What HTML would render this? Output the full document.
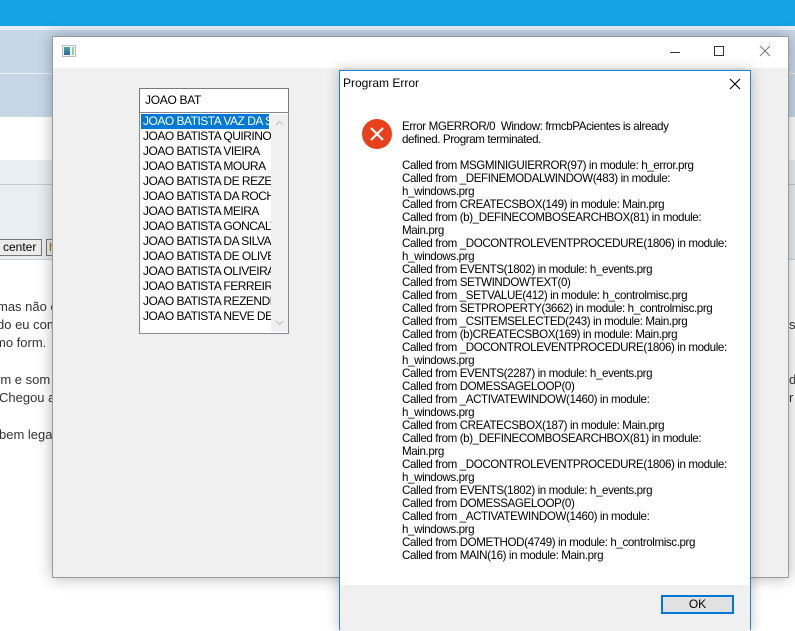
<!DOCTYPE html>
<html><head><meta charset="utf-8"><style>
*{margin:0;padding:0;box-sizing:border-box}
body{width:795px;height:624px;overflow:hidden;position:relative;background:#fff;font-family:"Liberation Sans",sans-serif}
.abs{position:absolute}
.bg-text{position:absolute;font-size:13px;color:#333;white-space:nowrap}
.list div{height:15px;line-height:15px;font-size:12px;letter-spacing:-0.5px;color:#000;padding-left:2px;white-space:nowrap;overflow:hidden;width:130px}
.err{position:absolute;left:402px;top:120px;font-size:11.6px;letter-spacing:-0.4px;line-height:13px;color:#000;white-space:pre}
</style></head><body>
<div class="abs" style="left:0;top:0;width:795px;height:26px;background:#16a3e6"></div>
<div class="abs" style="left:0;top:26px;width:795px;height:4px;background:#e8eef4"></div>
<div class="abs" style="left:0;top:30px;width:795px;height:43px;background:#c6d8e8"></div>
<div class="abs" style="left:0;top:73px;width:795px;height:1px;background:#eef3f8"></div>
<div class="abs" style="left:0;top:74px;width:795px;height:43px;background:#c6d8e8"></div>
<div class="abs" style="left:0;top:160px;width:795px;height:100px;background:#e9eef2"></div>
<div class="abs" style="left:0;top:184px;width:795px;height:1px;background:#c8c8c8"></div>
<div class="abs" style="left:0;top:259px;width:795px;height:1px;background:#d0d0d0"></div>
<div class="abs" style="left:-2px;top:239px;width:44px;height:17px;border:1px solid #777;background:#ececec;font-size:12px;line-height:15px;padding-left:4px">center</div>
<div class="abs" style="left:46px;top:239px;width:10px;height:17px;border:1px solid #777;background:#ececec;font-size:12px;line-height:15px;padding-left:2px;color:#a60">h</div>
<div class="bg-text" style="left:-3px;top:299px">mas não co</div>
<div class="bg-text" style="left:-3px;top:317px">do eu com</div>
<div class="bg-text" style="left:-5px;top:335px">mo form.</div>
<div class="bg-text" style="left:-4px;top:372px">rm e som</div>
<div class="bg-text" style="left:-1px;top:390px">Chegou a</div>
<div class="bg-text" style="left:-1px;top:427px">bem lega</div>
<div class="bg-text" style="left:789px;top:317px">s</div>
<div class="bg-text" style="left:789px;top:372px">d</div>
<div class="bg-text" style="left:789px;top:390px">r</div>

<div class="abs" style="left:52px;top:36px;width:737px;height:542px;background:#f0f0f0;border:1px solid #9a9a9a;box-shadow:0 0 14px rgba(0,0,0,0.3)">
  <div class="abs" style="left:0;top:0;width:735px;height:31px;background:#fff"></div>
  <div class="abs" style="left:9px;top:8px;width:14px;height:12px;border:1px solid #bbb;background:#f4f4f4">
    <div class="abs" style="left:1px;top:1px;width:6px;height:8px;background:linear-gradient(#4a9,#36a)"></div>
    <div class="abs" style="left:9px;top:1px;width:2px;height:8px;background:#9c9"></div>
  </div>
  <div class="abs" style="left:617px;top:15px;width:10px;height:1px;background:#333"></div>
  <div class="abs" style="left:661px;top:9px;width:10px;height:10px;border:1px solid #333"></div>
  <svg class="abs" style="left:706px;top:8px" width="12" height="12"><path d="M1 1L11 11M11 1L1 11" stroke="#777" stroke-width="1"/></svg>
  <div class="abs" style="left:86px;top:51px;width:150px;height:25px;background:#fff;border:1px solid #7a7a7a;font-size:12px;letter-spacing:-0.3px;line-height:22px;padding-left:5px">JOAO BAT</div>
  <div class="abs list" style="left:86px;top:75px;width:150px;height:222px;background:#fff;border:1px solid #828790;padding-top:1px;padding-left:1px">
    <div style="background:#0078d7;color:#fff;width:128px">JOAO BATISTA VAZ DA SILVA</div>
    <div>JOAO BATISTA QUIRINO</div>
    <div>JOAO BATISTA VIEIRA</div>
    <div>JOAO BATISTA MOURA</div>
    <div>JOAO BATISTA DE REZENDE</div>
    <div>JOAO BATISTA DA ROCHA</div>
    <div>JOAO BATISTA MEIRA</div>
    <div>JOAO BATISTA GONCALVES</div>
    <div>JOAO BATISTA DA SILVA</div>
    <div>JOAO BATISTA DE OLIVEIRA</div>
    <div>JOAO BATISTA OLIVEIRA</div>
    <div>JOAO BATISTA FERREIRA</div>
    <div>JOAO BATISTA REZENDE</div>
    <div>JOAO BATISTA NEVE DE</div>
    <div class="abs" style="left:131px;top:1px;width:17px;height:218px;background:#f0f0f0;padding:0"></div>
    <svg class="abs" style="left:135px;top:7px" width="9" height="6"><path d="M1 5L4.5 1.5L8 5" stroke="#c0c0c0" fill="none"/></svg>
    <svg class="abs" style="left:135px;top:207px" width="9" height="6"><path d="M1 1L4.5 4.5L8 1" stroke="#c0c0c0" fill="none"/></svg>
  </div>
</div>

<div class="abs" style="left:339px;top:70px;width:412px;height:560px;background:#fff;border:1px solid #1883d7;box-shadow:0 0 12px rgba(0,0,0,0.25)">
  <div class="abs" style="left:3px;top:5px;font-size:12px;color:#000">Program Error</div>
  <svg class="abs" style="left:389px;top:7px" width="12" height="12"><path d="M1 1L11 11M11 1L1 11" stroke="#000" stroke-width="1.1"/></svg>
  <div class="abs" style="left:0;top:514px;width:410px;height:46px;background:#f0f0f0"></div>
  <div class="abs" style="left:321px;top:524px;width:73px;height:19px;border:2px solid #0078d7;background:#e1e1e1;font-size:12px;line-height:15px;text-align:center">OK</div>
</div>
<svg class="abs" style="left:362px;top:119px" width="30" height="30"><circle cx="15" cy="15" r="15" fill="#e8401c"/><path d="M9 9L21 21M21 9L9 21" stroke="#fff" stroke-width="2.2"/></svg>
<div class="err">Error MGERROR/0  Window: frmcbPAcientes is already
defined. Program terminated.

Called from MSGMINIGUIERROR(97) in module: h_error.prg
Called from _DEFINEMODALWINDOW(483) in module:
h_windows.prg
Called from CREATECSBOX(149) in module: Main.prg
Called from (b)_DEFINECOMBOSEARCHBOX(81) in module:
Main.prg
Called from _DOCONTROLEVENTPROCEDURE(1806) in module:
h_windows.prg
Called from EVENTS(1802) in module: h_events.prg
Called from SETWINDOWTEXT(0)
Called from _SETVALUE(412) in module: h_controlmisc.prg
Called from SETPROPERTY(3662) in module: h_controlmisc.prg
Called from _CSITEMSELECTED(243) in module: Main.prg
Called from (b)CREATECSBOX(169) in module: Main.prg
Called from _DOCONTROLEVENTPROCEDURE(1806) in module:
h_windows.prg
Called from EVENTS(2287) in module: h_events.prg
Called from DOMESSAGELOOP(0)
Called from _ACTIVATEWINDOW(1460) in module:
h_windows.prg
Called from CREATECSBOX(187) in module: Main.prg
Called from (b)_DEFINECOMBOSEARCHBOX(81) in module:
Main.prg
Called from _DOCONTROLEVENTPROCEDURE(1806) in module:
h_windows.prg
Called from EVENTS(1802) in module: h_events.prg
Called from DOMESSAGELOOP(0)
Called from _ACTIVATEWINDOW(1460) in module:
h_windows.prg
Called from DOMETHOD(4749) in module: h_controlmisc.prg
Called from MAIN(16) in module: Main.prg</div>
</body></html>
